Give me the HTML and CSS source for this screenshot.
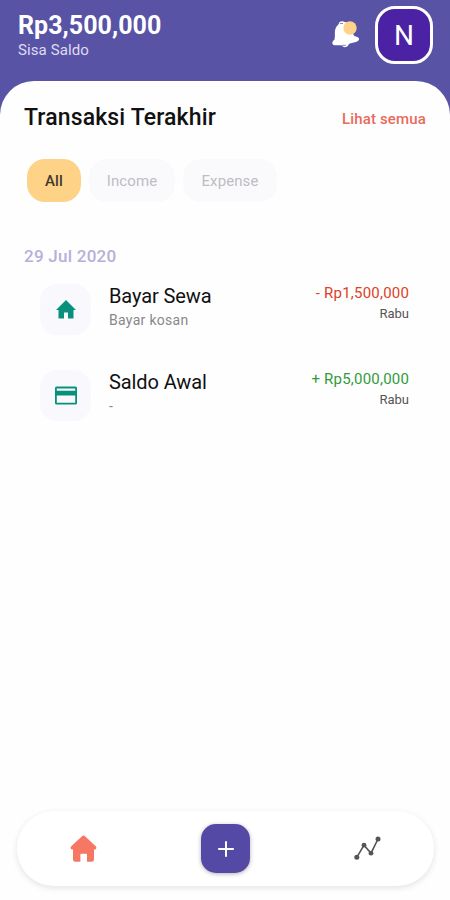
FILE: index.html
```html
<!DOCTYPE html>
<html lang="id">
<head>
<meta charset="utf-8">
<title>Transaksi</title>
<link rel="stylesheet" href="styles.css">
</head>
<body>
<div class="app">
  <header class="header">
    <div class="balance">
      <div class="balance-amount">Rp3,500,000</div>
      <div class="balance-label">Sisa Saldo</div>
    </div>
    <svg class="bell" width="30" height="30" viewBox="0 0 30 30">
      <path d="M8 5.500C8 3.500 11.500 2.500 13.500 4C19 4 22 10 22.500 17C24 19 28.500 18.500 28 21.500C27 24.500 22 24 18 26C16 30 12.500 30 11 27.500C8 26.500 5 28 2.500 27C.500 25.500 1 23.500 3.500 21.500C4.500 18 3 13 5 9.500C5.500 8 7 7.500 8 5.500Z" fill="#fff"/>
      <path d="M9 5.500h3M11 27.300h4" stroke="#5953a6" stroke-width=".7"/>
      <circle cx="19" cy="10" r="6.700" fill="#fed28a"/>
    </svg>
    <div class="avatar">N</div>
  </header>
  <main class="sheet">
    <div class="title-row">
      <h1 class="title">Transaksi Terakhir</h1>
      <a class="see-all">Lihat semua</a>
    </div>
    <div class="filters">
      <div class="chip chip-all">All</div>
      <div class="chip chip-income">Income</div>
      <div class="chip chip-expense">Expense</div>
    </div>
    <div class="date">29 Jul 2020</div>
    <div class="transactions">
      <div class="transaction">
        <div class="tile">
          <svg width="24" height="24" viewBox="0 0 24 24"><path fill="#07917c" d="M10 20.500v-6h4v6h5.500V12H22L12 2 2 12h2.500v8.500z"/></svg>
        </div>
        <div class="detail">
          <div class="name">Bayar Sewa</div>
          <div class="note">Bayar kosan</div>
        </div>
        <div class="figures">
          <div class="amount expense">- Rp1,500,000</div>
          <div class="day">Rabu</div>
        </div>
      </div>
      <div class="transaction">
        <div class="tile">
          <svg width="24" height="24" viewBox="0 0 24 24"><path fill="#07917c" fill-rule="evenodd" d="M2.500 2.500h19a1.500 1.500 0 0 1 1.500 1.500v15a1.500 1.500 0 0 1-1.500 1.500h-19A1.500 1.500 0 0 1 1 19V4a1.500 1.500 0 0 1 1.500-1.500zM2.800 4.500v2.300h18.400V4.500zM2.800 11.500v7.200h18.400v-7.200z"/></svg>
        </div>
        <div class="detail">
          <div class="name">Saldo Awal</div>
          <div class="note">-</div>
        </div>
        <div class="figures">
          <div class="amount income">+ Rp5,000,000</div>
          <div class="day">Rabu</div>
        </div>
      </div>
    </div>
  </main>
  <nav class="nav">
    <svg class="nav-icon" width="30" height="30" viewBox="0 0 30 30"><path fill="#f57764" d="M14 2.200q1.500-1.300 3 0L28 12.500q1.200 1.700-.5 3h-1.500v10q0 2.300-2.300 2.300h-4.700V20.500q0-.8-.8-.8h-5q-.8 0-.8.800v7.300H7.300Q5 27.800 5 25.500v-10H3.500q-1.800-1.300-.5-3z"/></svg>
    <div class="add">
      <svg width="18" height="18" viewBox="0 0 18 18"><path d="M9 1.200v15.600M1.200 9h15.600" stroke="#fff" stroke-width="2"/></svg>
    </div>
    <svg class="nav-icon" width="30" height="30" viewBox="0 0 30 30"><g fill="#555"><path d="M3.800 23.300 11 11.200l7 8L25 5" fill="none" stroke="#555" stroke-width="1.600"/><circle cx="3.800" cy="23.300" r="2.500"/><circle cx="11" cy="11.200" r="2.400"/><circle cx="18" cy="19.200" r="2.400"/><circle cx="25" cy="5" r="2.500"/></g></svg>
  </nav>
</div>
</body>
</html>
```

FILE: styles.css
```css
* { box-sizing: border-box; }
body { margin: 0; background: #fefefe; font-family: Roboto, sans-serif; }
.app { width: 450px; height: 900px; display: flex; flex-direction: column; background: linear-gradient(#5953a6 130px, #fefefe 130px); overflow: hidden; }
.header { height: 81px; flex: none; display: flex; align-items: flex-start; padding: 6px 17px 0 18px; }
.balance { flex: 1; padding-top: 5px; color: #fff; }
.balance-amount { font-size: 25px; font-weight: 700; line-height: 30px; letter-spacing: .05px; }
.balance-label { font-size: 15px; line-height: 18px; color: #dedbf4; letter-spacing: .1px; }
.bell { margin: 12px 14px 0 0; }
.avatar { width: 58px; height: 58px; border: 3px solid #fff; border-radius: 20px; background: #4b22a4; color: #fff; font-size: 28px; line-height: 54px; text-align: center; }
.sheet { flex: 1; background: #fefefe; border-radius: 34px 34px 0 0; padding: 22px 24px 0; }
.title-row { display: flex; justify-content: space-between; align-items: center; height: 30px; }
.title { margin: 0; font-size: 23px; font-weight: 500; line-height: 32px; color: #111; letter-spacing: .14px; }
.see-all { font-size: 15px; font-weight: 500; line-height: 20px; color: #e76b5c; letter-spacing: .15px; padding-top: 1px; }
.filters { display: flex; gap: 8px; margin: 26px 0 0 3px; }
.chip { height: 43px; border-radius: 18px; background: #fafafd; color: #bdbdc2; font-size: 15px; line-height: 44px; text-align: center; letter-spacing: .1px; }
.chip-all { width: 54px; background: #fed287; color: #41392f; font-weight: 500; }
.chip-income { width: 86px; }
.chip-expense { width: 94px; }
.date { margin-top: 44px; font-size: 17px; font-weight: 500; line-height: 20px; color: #b5b0d9; letter-spacing: .25px; }
.transactions { display: flex; flex-direction: column; gap: 34px; margin-top: 18px; padding: 0 17px 0 16px; }
.transaction { height: 52px; display: flex; }
.tile { width: 51px; height: 51px; border-radius: 17px; background: #f9f9fd; display: flex; align-items: center; justify-content: center; }
.detail { flex: 1; padding-left: 18px; }
.name { font-size: 20px; line-height: 24px; color: #111; letter-spacing: -.1px; }
.note { font-size: 14px; line-height: 18px; margin-top: 3px; color: #888; letter-spacing: .3px; }
.figures { text-align: right; }
.amount { font-size: 15px; line-height: 18px; letter-spacing: .23px; margin-right: -.2px; }
.expense { color: #df4026; }
.income { color: #319b3c; }
.day { font-size: 13px; line-height: 16px; margin-top: 4px; color: #555; }
.nav { flex: none; height: 75px; margin: 0 16px 14px 17px; padding: 0 51px; border-radius: 37px; background: #fff; display: flex; align-items: center; justify-content: space-between; box-shadow: 0 2px 6px rgba(0, 0, 0, .11); }
.add { width: 49px; height: 49px; border-radius: 15px; background: #5549a6; display: flex; align-items: center; justify-content: center; box-shadow: 0 1px 4px rgba(0, 0, 0, .3); }
```
